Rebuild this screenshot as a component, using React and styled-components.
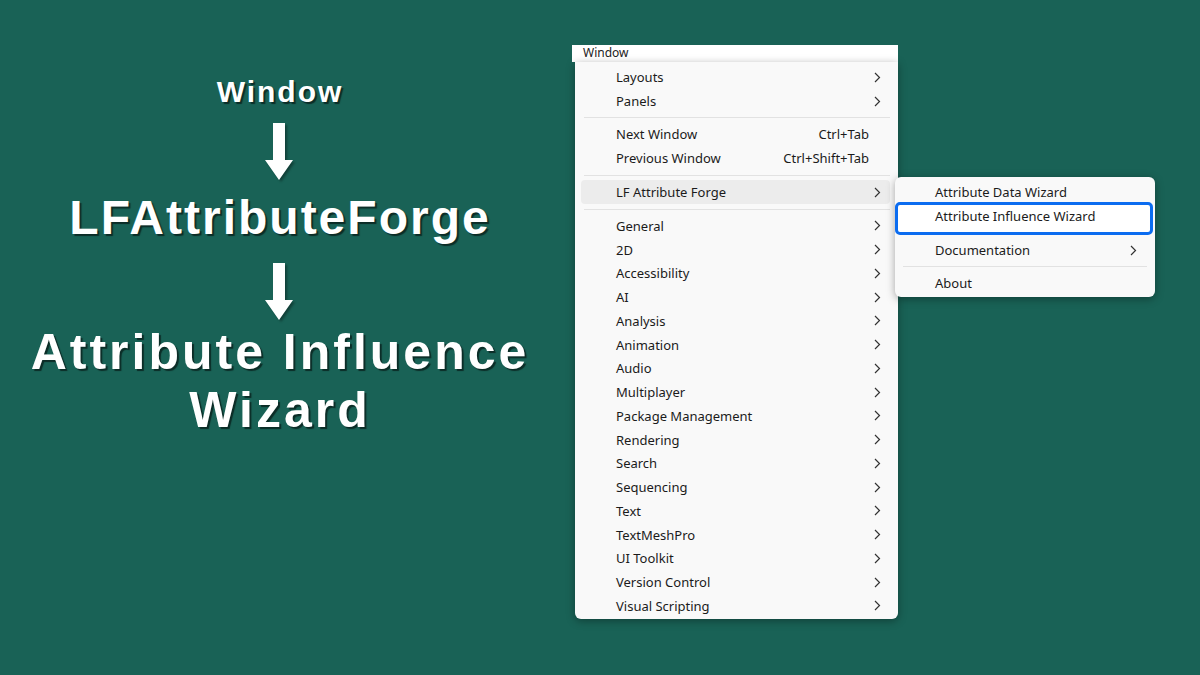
import React from 'react'
import styled, { createGlobalStyle } from 'styled-components'

const Global = createGlobalStyle`
    html, body {
        margin:0;
        padding:0;
        background:#196256;
    }
    #root {
        width:1200px;
        height:675px;
        overflow:hidden;
    }
`
const Page = styled.div`
    display:flex;
    width:1200px;
    height:675px;
    background:#196256;
`
const Steps = styled.div`
    width:560px;
    display:flex;
    flex-direction:column;
    align-items:center;
    padding-top:77px;
    font-family:"Liberation Sans", Arial, sans-serif;
    font-weight:700;
    color:#fff;
    text-align:center;
    text-shadow:2px 2px 1px rgba(0,0,0,0.55);
`
const Step = styled.div`
    font-size:${props => props.size}px;
    line-height:${props => props.lh}px;
    letter-spacing:${props => props.ls}px;
`
const ArrowSvg = styled.svg`
    display:block;
    margin:${props => props.margin};
    filter:drop-shadow(2px 2px 1px rgba(0,0,0,0.35));
`
const Arrow = ({margin}) => (
    <ArrowSvg margin={margin} width="30" height="57" viewBox="0 0 30 57">
        <path d="M8 0 H20 V37 H28 L14 57 L0 37 H8 Z" fill="#fff"/>
    </ArrowSvg>
)

const MenuArea = styled.div`
    padding-top:45px;
    padding-left:12px;
    font-family:"Noto Sans", "Open Sans", sans-serif;
    font-size:13px;
    color:#1b1b1b;
`
const TitleBar = styled.div`
    width:326px;
    height:17px;
    background:#fff;
    box-sizing:border-box;
    padding-left:11px;
    font-size:12px;
    line-height:15px;
    overflow:hidden;
    color:#222;
`
const Panel = styled.div`
    position:relative;
    width:323px;
    margin-left:3px;
    background:#f9f9f9;
    border-radius:0 0 6px 6px;
    box-shadow:0 2px 8px rgba(0,0,0,0.35);
    padding:3px 0 1px;
`
const Row = styled.div`
    position:relative;
    display:flex;
    align-items:center;
    height:${props => props.h || 23.75}px;
    margin:0 8px 0 6px;
    padding:0 9px 0 35px;
    border-radius:4px;
    background:${props => props.active ? '#ececec' : 'transparent'};
`
const Label = styled.span`
    flex:1;
    white-space:nowrap;
`
const Shortcut = styled.span`
    margin-right:12px;
    white-space:nowrap;
`
const Sep = styled.div`
    height:${props => props.h || 10}px;
    display:flex;
    align-items:center;
    margin:0 8px 0 9px;
    &::after {
        content:'';
        flex:1;
        height:1px;
        background:#e2e2e2;
    }
`
const Chev = () => (
    <svg width="7" height="11" viewBox="0 0 7 11">
        <polyline points="1,1 5.5,5.5 1,10" fill="none" stroke="#333" strokeWidth="1.2"/>
    </svg>
)
const Sub = styled.div`
    position:absolute;
    left:314px;
    top:-3px;
    width:260px;
    background:#f9f9f9;
    border-radius:6px;
    box-shadow:0 2px 8px rgba(0,0,0,0.35);
    padding:3px 0 2px;
`
const SubRow = styled.div`
    display:flex;
    align-items:center;
    height:24px;
    padding:0 18px 0 40px;
`
const Focus = styled.div`
    display:flex;
    align-items:flex-start;
    height:33px;
    box-sizing:border-box;
    margin:-2px 2px 3px 0;
    padding:0 16px 0 37px;
    border:3px solid #0b6cf0;
    border-radius:5px;
    background:#fff;
    line-height:22px;
`
const SubSep = styled.div`
    height:9px;
    display:flex;
    align-items:center;
    margin:0 8px;
    &::after {
        content:'';
        flex:1;
        height:1px;
        background:#e2e2e2;
    }
`

const topItems = ['Layouts', 'Panels']
const groups = ['General','2D','Accessibility','AI','Analysis','Animation','Audio','Multiplayer',
    'Package Management','Rendering','Search','Sequencing','Text','TextMeshPro','UI Toolkit',
    'Version Control','Visual Scripting']

export default function App() {
    return (
        <Page>
            <Global/>
            <Steps>
                <Step size={30} lh={30} ls={2}>Window</Step>
                <Arrow margin="16px 0 14px"/>
                <Step size={48} lh={48} ls={2}>LFAttributeForge</Step>
                <Arrow margin="21px 0 3px"/>
                <Step size={50} lh={58} ls={3}>Attribute Influence<br/>Wizard</Step>
            </Steps>
            <MenuArea>
                <TitleBar>Window</TitleBar>
                <Panel>
                    {topItems.map(t => (
                        <Row key={t} h={24}><Label>{t}</Label><Chev/></Row>
                    ))}
                    <Sep h={9}/>
                    <Row h={24}><Label>Next Window</Label><Shortcut>Ctrl+Tab</Shortcut></Row>
                    <Row h={24}><Label>Previous Window</Label><Shortcut>Ctrl+Shift+Tab</Shortcut></Row>
                    <Sep/>
                    <Row h={24} active>
                        <Label>LF Attribute Forge</Label><Chev/>
                        <Sub>
                            <SubRow><Label>Attribute Data Wizard</Label></SubRow>
                            <Focus><Label>Attribute Influence Wizard</Label></Focus>
                            <SubRow><Label>Documentation</Label><Chev/></SubRow>
                            <SubSep/>
                            <SubRow><Label>About</Label></SubRow>
                        </Sub>
                    </Row>
                    <Sep/>
                    {groups.map(g => (
                        <Row key={g}><Label>{g}</Label><Chev/></Row>
                    ))}
                </Panel>
            </MenuArea>
        </Page>
    )
}
